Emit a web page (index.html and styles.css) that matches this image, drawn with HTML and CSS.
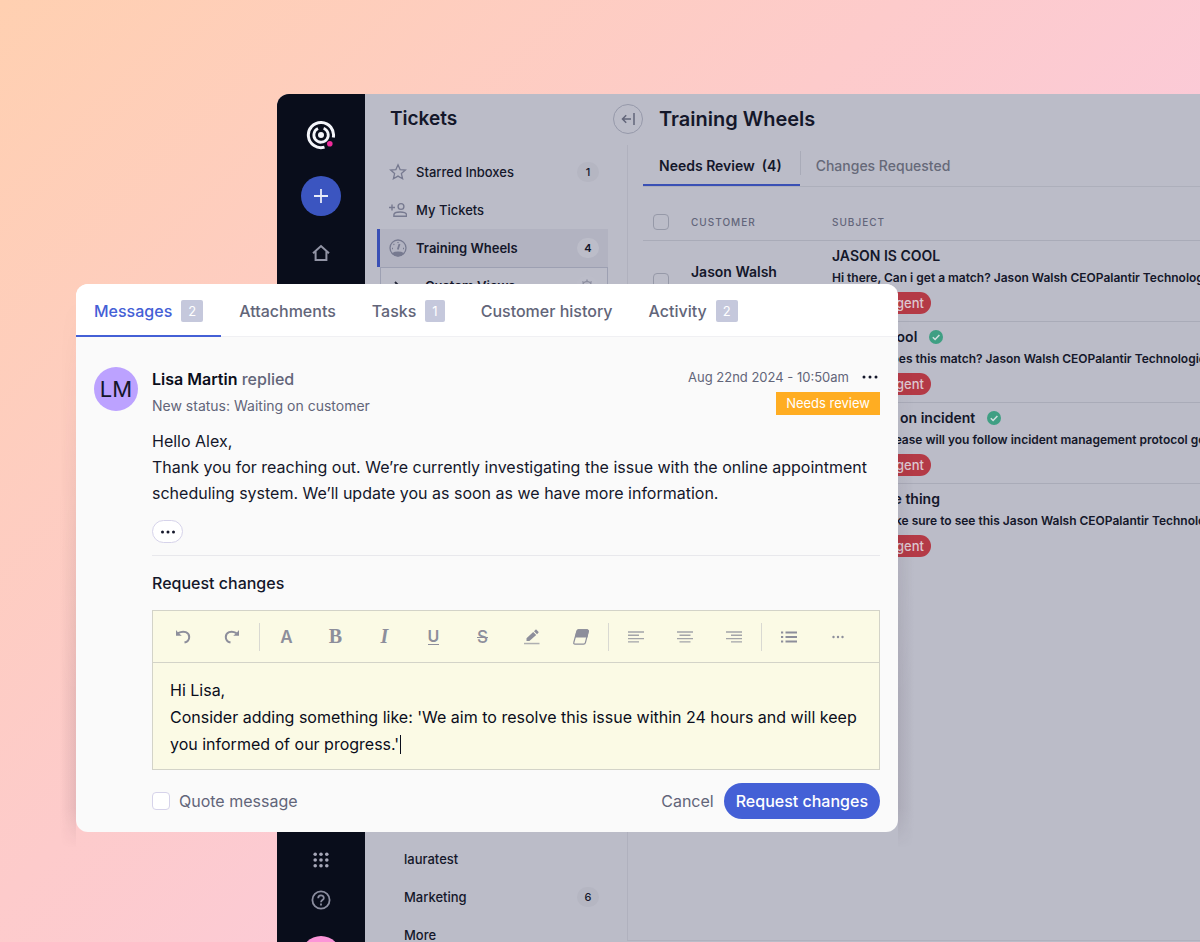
FILE: index.html
```
<!doctype html>
<html lang="en">
  <head>
    <meta charset="UTF-8" />
    <meta name="viewport" content="width=device-width, initial-scale=1.0" />
    <title>Training Wheels - Tickets</title>
    <link rel="stylesheet" href="styles.css">
  </head>
  <body>
    <div class="stage">
      <div class="app">
        <nav class="rail" aria-label="Main">
          <svg class="logo" width="30" height="30" viewBox="0 0 30 30" fill="none" stroke="#f4f5fa" stroke-width="3">
            <path d="M18.5 27.1A12.6 12.6 0 1 1 27.3 17.5" />
            <path d="M17.6 8.300A7.200 7.200 0 1 1 12 8.500" stroke-width="2.800" />
            <circle cx="15" cy="15" r="3" fill="#f4f5fa" stroke="none" />
            <circle cx="23.800" cy="23.800" r="2.800" fill="#f02b9b" stroke="none" />
          </svg>
          <button class="add" aria-label="New ticket">
            <svg width="14" height="14" viewBox="0 0 14 14" stroke="#e9ecf8" stroke-width="1.8"><path d="M7 0v14M0 7h14" /></svg>
          </button>
          <a class="rail-link" href="#" aria-label="Home">
            <svg width="18" height="18" viewBox="0 0 18 18" fill="none" stroke="#9294a5" stroke-width="2"><path d="M1 9.2 9 2l8 7.2M3.6 7.5v8.6h10.8V7.5" /></svg>
          </a>
          <div class="rail-bottom">
            <a class="rail-link" href="#" aria-label="Apps">
              <svg width="16" height="16" viewBox="0 0 16 16" fill="#a6a7b8">
                <circle cx="2.2" cy="2.2" r="1.8" /><circle cx="8" cy="2.2" r="1.8" /><circle cx="13.8" cy="2.2" r="1.8" />
                <circle cx="2.2" cy="8" r="1.8" /><circle cx="8" cy="8" r="1.8" /><circle cx="13.8" cy="8" r="1.8" />
                <circle cx="2.2" cy="13.8" r="1.8" /><circle cx="8" cy="13.8" r="1.8" /><circle cx="13.8" cy="13.8" r="1.8" />
              </svg>
            </a>
            <a class="rail-link" href="#" aria-label="Help">
              <svg width="20" height="20" viewBox="0 0 20 20" fill="none" stroke="#8b8d9f" stroke-width="1.8">
                <circle cx="10" cy="10" r="8.6" />
                <path d="M7.2 8.2c0-3.8 5.6-3.6 5.6-.3 0 2.1-2.8 2.2-2.8 4.4" />
                <path d="M10 13.6v1.9" />
              </svg>
            </a>
            <button class="profile" aria-label="Profile"></button>
          </div>
        </nav>

        <aside class="inboxes">
          <h2>Tickets</h2>
          <nav class="list" aria-label="Inboxes">
            <a class="item" href="#">
              <svg width="18" height="18" viewBox="0 0 18 18" fill="none" stroke="#777a90" stroke-width="1.3"><path d="m9 1.8 2.1 4.8 5.3.5-4 3.5 1.200 5.200L9 13.100l-4.600 2.700 1.200-5.200-4-3.500 5.300-.5z" /></svg>
              Starred Inboxes
              <span class="pill">1</span>
            </a>
            <a class="item" href="#">
              <svg width="18" height="18" viewBox="0 0 18 18" fill="none" stroke="#777a90" stroke-width="1.4"><path d="M0 6.500h6M3 3.500v6" /><circle cx="12" cy="5.500" r="2.900" /><path d="M5.700 15.300v-1.600c0-3.700 12.600-3.700 12.600 0v1.600z" transform="translate(-.8)" /></svg>
              My Tickets
            </a>
            <a class="item active" href="#" aria-current="page">
              <svg width="18" height="18" viewBox="0 0 18 18" fill="none" stroke="#777a90" stroke-width="1.300"><circle cx="9" cy="9" r="8" /><path d="M3.500 14.600c3-1.800 8-1.800 11 0C11 17.500 7 17.500 3.500 14.600z" fill="#777a90" /><path d="M8.800 10.500 10.500 5" stroke-width="1.800" /><path d="M9 3v1M4.500 5l.8.800M3 9.500h1M14 9.500h1" /></svg>
              Training Wheels
              <span class="pill">4</span>
            </a>
            <a class="item views" href="#">
              <svg width="18" height="18" viewBox="0 0 18 18" fill="none" stroke="#232638" stroke-width="1.800"><path d="m6 5 4 4-4 4" /></svg>
              Custom Views
              <span class="pill">
                <svg width="14" height="14" viewBox="0 0 14 14" fill="none" stroke="#8d8fa1" stroke-width="1.400"><circle cx="7" cy="7" r="4.500" /><circle cx="7" cy="7" r="1.600" /><path d="M7 .500v2M7 11.500v2M.500 7h2M11.500 7h2M2.400 2.400l1.400 1.400M10.200 10.200l1.400 1.400M2.400 11.600l1.400-1.400M10.200 3.800l1.400-1.400" /></svg>
              </span>
            </a>
          </nav>
          <nav class="list teams" aria-label="Teams">
            <a class="item" href="#">lauratest</a>
            <a class="item" href="#">Marketing <span class="pill">6</span></a>
            <a class="item" href="#">More</a>
          </nav>
        </aside>

        <main class="main">
          <header class="main-header">
            <button class="collapse" aria-label="Collapse sidebar">
              <svg width="14" height="14" viewBox="0 0 14 14" fill="none" stroke="#62657a" stroke-width="1.500"><path d="M13 1v12M10 7H1.500M5.200 3.300 1.500 7l3.700 3.700" /></svg>
            </button>
            <h1>Training Wheels</h1>
          </header>
          <div class="content">
            <div class="tabs">
              <button class="tab active">Needs Review&nbsp; (4)</button>
              <button class="tab">Changes Requested</button>
            </div>
            <table class="tickets">
              <thead>
                <tr>
                  <th class="check"><input type="checkbox" aria-label="Select all" /></th>
                  <th class="customer">Customer</th>
                  <th>Subject</th>
                </tr>
              </thead>
              <tbody>
                <tr>
                  <td class="check"><input type="checkbox" aria-label="Select ticket" /></td>
                  <td class="customer">Jason Walsh</td>
                  <td>
                    <p class="subject">JASON IS COOL</p>
                    <p class="preview">Hi there, Can i get a match? Jason Walsh CEOPalantir Technologies</p>
                    <span class="tag">Urgent</span>
                  </td>
                </tr>
                <tr>
                  <td class="check"><input type="checkbox" aria-label="Select ticket" /></td>
                  <td class="customer"></td>
                  <td>
                    <p class="subject">Jason's cool
                      <svg width="14" height="14" viewBox="0 0 14 14"><circle cx="7" cy="7" r="7" fill="#3f9f83" /><path d="m3.800 7.200 2.300 2.300 4.300-4.600" fill="none" stroke="#d3dfe0" stroke-width="1.500" /></svg>
                    </p>
                    <p class="preview">Hi there, does this match? Jason Walsh CEOPalantir Technologies</p>
                    <span class="tag">Urgent</span>
                  </td>
                </tr>
                <tr>
                  <td class="check"><input type="checkbox" aria-label="Select ticket" /></td>
                  <td class="customer"></td>
                  <td>
                    <p class="subject">Follow up on incident
                      <svg width="14" height="14" viewBox="0 0 14 14"><circle cx="7" cy="7" r="7" fill="#3f9f83" /><path d="m3.800 7.200 2.300 2.300 4.300-4.600" fill="none" stroke="#d3dfe0" stroke-width="1.500" /></svg>
                    </p>
                    <p class="preview">Hi there, please will you follow incident management protocol going</p>
                    <span class="tag">Urgent</span>
                  </td>
                </tr>
                <tr>
                  <td class="check"><input type="checkbox" aria-label="Select ticket" /></td>
                  <td class="customer"></td>
                  <td>
                    <p class="subject">About one thing</p>
                    <p class="preview">Please, make sure to see this Jason Walsh CEOPalantir Technologies</p>
                    <span class="tag">Urgent</span>
                  </td>
                </tr>
              </tbody>
            </table>
          </div>
        </main>
      </div>

      <section class="modal" aria-label="Ticket">
        <div class="modal-tabs">
          <button class="modal-tab active">Messages <span class="count">2</span></button>
          <button class="modal-tab">Attachments</button>
          <button class="modal-tab">Tasks <span class="count">1</span></button>
          <button class="modal-tab">Customer history</button>
          <button class="modal-tab">Activity <span class="count">2</span></button>
        </div>
        <div class="message">
          <div class="avatar">LM</div>
          <div class="message-body">
            <div class="message-head">
              <div>
                <p class="author"><strong>Lisa Martin</strong> replied</p>
                <p class="status">New status: Waiting on customer</p>
              </div>
              <div class="meta">
                <div class="date">
                  Aug 22nd 2024 - 10:50am
                  <button class="dots" aria-label="Message options">
                    <svg width="16" height="4" viewBox="0 0 16 4" fill="#14172a"><circle cx="2" cy="2" r="1.500" /><circle cx="8" cy="2" r="1.500" /><circle cx="14" cy="2" r="1.500" /></svg>
                  </button>
                </div>
                <span class="review">Needs review</span>
              </div>
            </div>
            <p class="text">Hello Alex,<br />Thank you for reaching out. We’re currently investigating the issue with the online appointment scheduling system. We’ll update you as soon as we have more information.</p>
            <button class="quoted" aria-label="Show quoted text">
              <svg width="16" height="4" viewBox="0 0 16 4" fill="#14172a"><circle cx="2.500" cy="2" r="1.500" /><circle cx="8" cy="2" r="1.500" /><circle cx="13.500" cy="2" r="1.500" /></svg>
            </button>

            <form class="request">
              <label class="request-label" for="note">Request changes</label>
              <div class="editor">
                <div class="toolbar">
                  <button type="button" aria-label="Undo">
                    <svg width="16" height="16" viewBox="0 0 16 16" fill="none" stroke="#8d8e9b" stroke-width="2"><path d="M3 4.200c6-3.400 11.200-.6 11.200 3.700 0 3-2 5-4.700 5.600" /><path d="M1 1v5.800h5.800L3.500 4z" fill="#8d8e9b" stroke="none" /></svg>
                  </button>
                  <button type="button" aria-label="Redo">
                    <svg width="16" height="16" viewBox="0 0 16 16" fill="none" stroke="#8d8e9b" stroke-width="2"><path d="M12.500 4.200C7 .800 1.800 3.600 1.800 7.900c0 3 2 5 4.700 5.600" /><path d="M15 1v5.800H9.200L12.500 4z" fill="#8d8e9b" stroke="none" /></svg>
                  </button>
                  <span class="sep"></span>
                  <button type="button" class="color" aria-label="Text color">A</button>
                  <button type="button" class="bold" aria-label="Bold">B</button>
                  <button type="button" class="italic" aria-label="Italic">I</button>
                  <button type="button" class="underline" aria-label="Underline"><span>U</span></button>
                  <button type="button" class="strike" aria-label="Strikethrough">S</button>
                  <button type="button" aria-label="Highlight">
                    <svg width="16" height="16" viewBox="0 0 16 16" fill="#8d8e9b"><path d="M2.500 12V9.200l6.700-6.300 3 3L5.400 12zM10 2.200l1.500-1.400c.3-.3.700-.3 1 0l1.900 1.900c.3.300.3.700 0 1L13 5.200z" /><path d="M0 13.800h15.500v1.500H0z" opacity=".7" /></svg>
                  </button>
                  <button type="button" aria-label="Clear formatting">
                    <svg width="16" height="16" viewBox="0 0 16 16" fill="none" stroke="#8d8e9b" stroke-width="1.200"><path d="M5.600.8h8.300c1 0 1.500.7 1.300 1.600l-2.700 11c-.2 1-1 1.800-2 1.800H2c-1 0-1.500-.8-1.200-1.700l3-11.100C4 1.400 4.700.8 5.600.8z" /><path d="M5.600.8h8.300c1 0 1.500.7 1.300 1.600L14 8H2.600l1.500-5.800C4.300 1.400 4.700.8 5.600.8z" fill="#8d8e9b" /></svg>
                  </button>
                  <span class="sep"></span>
                  <button type="button" aria-label="Align left">
                    <svg width="16" height="14" viewBox="0 0 16 14" stroke="#a3a4a9" stroke-width="1.400"><path d="M0 2h16M0 5.300h11M0 8.600h16M0 11.900h11" /></svg>
                  </button>
                  <button type="button" aria-label="Align center">
                    <svg width="16" height="14" viewBox="0 0 16 14" stroke="#a3a4a9" stroke-width="1.400"><path d="M0 2h16M2.500 5.300h11M0 8.600h16M2.500 11.900h11" /></svg>
                  </button>
                  <button type="button" aria-label="Align right">
                    <svg width="16" height="14" viewBox="0 0 16 14" stroke="#a3a4a9" stroke-width="1.400"><path d="M0 2h16M5 5.300h11M0 8.600h16M5 11.900h11" /></svg>
                  </button>
                  <span class="sep"></span>
                  <button type="button" aria-label="Bulleted list">
                    <svg width="16" height="14" viewBox="0 0 16 14" stroke="#8d8e9b" stroke-width="2.200"><path d="M0 2.500h2.200M4.500 2.500H16M0 7h2.200M4.500 7H16M0 11.500h2.200M4.500 11.500H16" /></svg>
                  </button>
                  <button type="button" aria-label="More">
                    <svg width="12" height="4" viewBox="0 0 12 4" fill="#8d8e9b"><circle cx="1.500" cy="2" r="1.200" /><circle cx="6" cy="2" r="1.200" /><circle cx="10.500" cy="2" r="1.200" /></svg>
                  </button>
                </div>
                <div class="field">
                  <textarea id="note" rows="3">Hi Lisa,
Consider adding something like: 'We aim to resolve this issue within 24 hours and will keep you informed of our progress.'</textarea>
                  <span class="caret"></span>
                </div>
              </div>
              <div class="actions">
                <label class="quote"><input type="checkbox" /> Quote message</label>
                <button type="button" class="cancel">Cancel</button>
                <button type="button" class="submit">Request changes</button>
              </div>
            </form>
          </div>
        </div>
      </section>
    </div>
  </body>
</html>
```

FILE: styles.css
```
* {
  box-sizing: border-box;
}

body {
  margin: 0;
  font-family: Inter, "Liberation Sans", sans-serif;
  font-size: 14px;
  color: #14172a;
}

h1,
h2,
p {
  margin: 0;
}
button {
  font: inherit;
  color: inherit;
  margin: 0;
  padding: 0;
  border: 0;
  background: none;
  cursor: pointer;
}
a {
  color: inherit;
  text-decoration: none;
}
svg {
  display: block;
  flex: none;
}
input[type="checkbox"] {
  appearance: none;
  display: block;
  width: 16px;
  height: 16px;
  margin: 0;
  border: 1px solid #9699a8;
  border-radius: 4px;
}

.stage {
  position: relative;
  height: 100vh;
  padding: 94px 0 0 277px;
  overflow: hidden;
  background: linear-gradient(135deg, #ffd0b1, #fdcbcb 42%, #fbcad9 65%, #f8c8dc);
}

/* app window */
.app {
  display: flex;
  height: 100%;
  overflow: hidden;
  border-top-left-radius: 12px;
  background-color: #bbbcc8;
}

.rail {
  width: 88px;
  flex: none;
  display: flex;
  flex-direction: column;
  align-items: center;
  padding-top: 26px;
  background-color: #090d1b;
}
.add {
  display: flex;
  align-items: center;
  justify-content: center;
  width: 40px;
  height: 40px;
  margin: 26px 0 28px;
  border-radius: 50%;
  background-color: #3b55c0;
}
.rail-bottom {
  display: flex;
  flex-direction: column;
  align-items: center;
  gap: 22px;
  margin-top: auto;
  margin-bottom: -34px;
}
.profile {
  width: 40px;
  height: 40px;
  border-radius: 50%;
  background-color: #fc95d8;
  margin-top: 4px;
}

.inboxes {
  width: 248px;
  flex: none;
  padding: 12px 5px 0 12px;
}
.inboxes h2 {
  margin-left: 13px;
  font-size: 19px;
  font-weight: 600;
  line-height: 26px;
}
.list {
  display: flex;
  flex-direction: column;
  margin-top: 21px;
  font-size: 13px;
  font-weight: 500;
}
.item {
  display: flex;
  align-items: center;
  gap: 9px;
  height: 38px;
  padding: 0 9px;
  border-left: 3px solid transparent;
}
.item.active {
  border-left-color: #3a50b5;
  background-color: #b2b3c1;
  font-weight: 600;
}
.item.views {
  gap: 18px;
  margin-left: 3px;
  padding-left: 8px;
  border: 1px solid #9da0b2;
  font-weight: 600;
}
.pill {
  display: flex;
  align-items: center;
  justify-content: center;
  width: 22px;
  height: 20px;
  margin-left: auto;
  border-radius: 10px;
  background-color: #b5b6c2;
  font-size: 11px;
}
.item.active .pill,
.item.views .pill {
  background-color: #bcbdc9;
}
.teams {
  margin-top: 535px;
  padding-left: 15px;
}

.main {
  flex: 1;
  min-width: 0;
  display: flex;
  flex-direction: column;
}
.main-header {
  display: flex;
  align-items: center;
  gap: 16px;
  padding-top: 10px;
}
.main-header h1 {
  font-size: 20px;
  font-weight: 600;
  line-height: 26px;
}
.collapse {
  display: flex;
  align-items: center;
  justify-content: center;
  width: 30px;
  height: 30px;
  border: 1px solid #9699aa;
  border-radius: 50%;
}
.content {
  flex: 1;
  margin: 11px 0 1px 14px;
  padding-left: 15px;
  overflow: hidden;
  border-left: 1px solid #b0b1be;
  border-bottom: 1px solid #b0b1be;
}
.tabs {
  display: flex;
  height: 42px;
  border-bottom: 1px solid #adafbb;
}
.tab {
  padding: 0 16px;
  font-weight: 500;
  color: #666979;
}
.tab.active {
  padding: 2px 18px 0 16px;
  border-bottom: 2px solid #3a50b5;
  font-weight: 600;
  color: #14172a;
}
.tab + .tab {
  background: linear-gradient(#a9abb8, #a9abb8) no-repeat 0 6px / 1px 24px;
}

.tickets {
  width: 100%;
  border-collapse: collapse;
  table-layout: fixed;
}
.tickets tr {
  border-bottom: 1px solid #a9abb8;
}
.tickets tbody tr:last-child {
  border-bottom: 0;
}
.tickets th,
.tickets td {
  padding: 0;
  text-align: left;
  white-space: nowrap;
}
.tickets th {
  height: 53px;
  padding-top: 17px;
  font-size: 10px;
  font-weight: 500;
  text-transform: uppercase;
  letter-spacing: 1px;
  color: #62657a;
}
.tickets td {
  height: 81px;
  padding: 6px 0;
}
.tickets .check {
  width: 48px;
  padding-left: 10px;
}
.tickets .customer {
  width: 141px;
}
.tickets td.customer {
  padding-bottom: 24px;
  font-weight: 600;
}
.subject {
  display: flex;
  align-items: center;
  gap: 12px;
  font-weight: 600;
  line-height: 18px;
}
.preview {
  margin-top: 4px;
  font-size: 12px;
  font-weight: 600;
  line-height: 18px;
}
.tag {
  display: block;
  width: 99px;
  margin-top: 5px;
  padding-right: 7px;
  border-radius: 11px;
  background-color: #b43a46;
  color: #dcc8d0;
  font-size: 13px;
  font-weight: 500;
  line-height: 22px;
  text-align: right;
}

/* ticket modal */
.modal {
  position: absolute;
  top: 284px;
  left: 76px;
  width: calc(100% - 378px);
  border-radius: 12px;
  background-color: #fafafa;
}
/* side shadows fade in from the top */
.modal::before,
.modal::after {
  content: "";
  position: absolute;
  top: 12px;
  bottom: -16px;
  width: 16px;
  mask-image: linear-gradient(transparent, #000 400px, #000 calc(100% - 40px), transparent);
}
.modal::before {
  right: 100%;
  background: linear-gradient(to left, rgba(40, 20, 40, 0.1), transparent);
}
.modal::after {
  left: 100%;
  background: linear-gradient(to right, rgba(40, 20, 40, 0.1), transparent);
}

.modal-tabs {
  display: flex;
  height: 53px;
  border-bottom: 1px solid #f0f0f3;
  border-radius: 12px 12px 0 0;
  background-color: #fff;
}
.modal-tab {
  display: flex;
  align-items: center;
  gap: 9px;
  height: 53px;
  padding: 2px 18px 0;
  border-bottom: 2px solid transparent;
  font-size: 16px;
  font-weight: 500;
  color: #626579;
}
.modal-tab.active {
  border-bottom-color: #4460d6;
  color: #4460d6;
}
.count {
  padding: 0 7px;
  border-radius: 2px;
  background-color: #c5c8dc;
  color: #fff;
  font-size: 13px;
  font-weight: 400;
  line-height: 22px;
}

.message {
  display: flex;
  gap: 14px;
  padding: 28px 18px 13px;
}
.avatar {
  flex: none;
  display: flex;
  align-items: center;
  justify-content: center;
  width: 44px;
  height: 44px;
  margin-top: 2px;
  border-radius: 50%;
  background-color: #bca2ff;
  font-size: 22px;
}
.message-body {
  flex: 1;
  min-width: 0;
}
.message-head {
  display: flex;
  justify-content: space-between;
}
.author {
  color: #626579;
  font-size: 16px;
  font-weight: 500;
  line-height: 28px;
}
.author strong {
  font-weight: 600;
  color: #0a0d1b;
}
.status {
  color: #626579;
  font-size: 14px;
  line-height: 26px;
}
.meta {
  display: flex;
  flex-direction: column;
  align-items: flex-end;
  gap: 3px;
}
.date {
  display: flex;
  align-items: center;
  gap: 13px;
  color: #626579;
  font-size: 13px;
  line-height: 24px;
}
.dots {
  padding: 4px 2px 4px 0;
}
.review {
  padding: 0 10px;
  background-color: #ffad22;
  color: #fff;
  font-size: 13px;
  line-height: 23px;
}
.text {
  margin-top: 9px;
  font-size: 16px;
  line-height: 26px;
}
.quoted {
  display: flex;
  align-items: center;
  justify-content: center;
  width: 31px;
  height: 23px;
  margin-top: 14px;
  border: 1px solid #d6d3ea;
  border-radius: 12px;
  background-color: #fff;
}

.request {
  margin-top: 12px;
  border-top: 1px solid #e8e8ec;
}
.request-label {
  display: block;
  padding: 14px 0;
  font-size: 16px;
  font-weight: 500;
  line-height: 26px;
}
.editor {
  border: 1px solid #d3d3c8;
  background-color: #fbfae5;
}
.toolbar {
  display: flex;
  align-items: center;
  height: 52px;
  padding: 0 5px;
  border-bottom: 1px solid #d3d3c8;
  color: #8d8e9b;
}
.toolbar button {
  display: flex;
  align-items: center;
  justify-content: center;
  width: 49px;
  height: 36px;
  font-size: 17px;
}
.toolbar .sep {
  width: 6px;
  height: 28px;
  background: linear-gradient(#d9d9d2, #d9d9d2) no-repeat center / 1px 100%;
}
.toolbar .color {
  font-weight: 600;
}
.toolbar .bold,
.toolbar .italic {
  font-family: "Liberation Serif", serif;
  font-size: 20px;
  font-weight: 700;
}
.toolbar .italic {
  font-style: italic;
}
.toolbar .underline {
  font-size: 16px;
  font-weight: 600;
}
.toolbar .underline span {
  border-bottom: 1px solid #8d8e9b;
  line-height: 16px;
}
.toolbar .strike {
  font-weight: 500;
  text-decoration: line-through;
}
.field {
  position: relative;
  padding: 14px 17px 11px;
}
.field textarea {
  display: block;
  width: 100%;
  height: 81px;
  padding: 0;
  border: 0;
  outline: 0;
  resize: none;
  overflow: hidden;
  background: none;
  color: #0a0d1b;
  font: inherit;
  font-size: 16px;
  line-height: 27px;
}
.caret {
  position: absolute;
  left: 247px;
  bottom: 15px;
  width: 1px;
  height: 19px;
  background-color: #0a0d1b;
}

.actions {
  display: flex;
  align-items: center;
  gap: 10px;
  margin-top: 13px;
  font-size: 16px;
  color: #626579;
}
.quote {
  display: flex;
  align-items: center;
  gap: 9px;
  margin-right: auto;
}
.quote input[type="checkbox"] {
  width: 18px;
  height: 18px;
  border-color: #d6d3ea;
  background-color: #fff;
}
.submit {
  height: 36px;
  padding: 0 12px;
  border-radius: 18px;
  background-color: #4460d6;
  color: #fff;
  font-weight: 500;
}
```
